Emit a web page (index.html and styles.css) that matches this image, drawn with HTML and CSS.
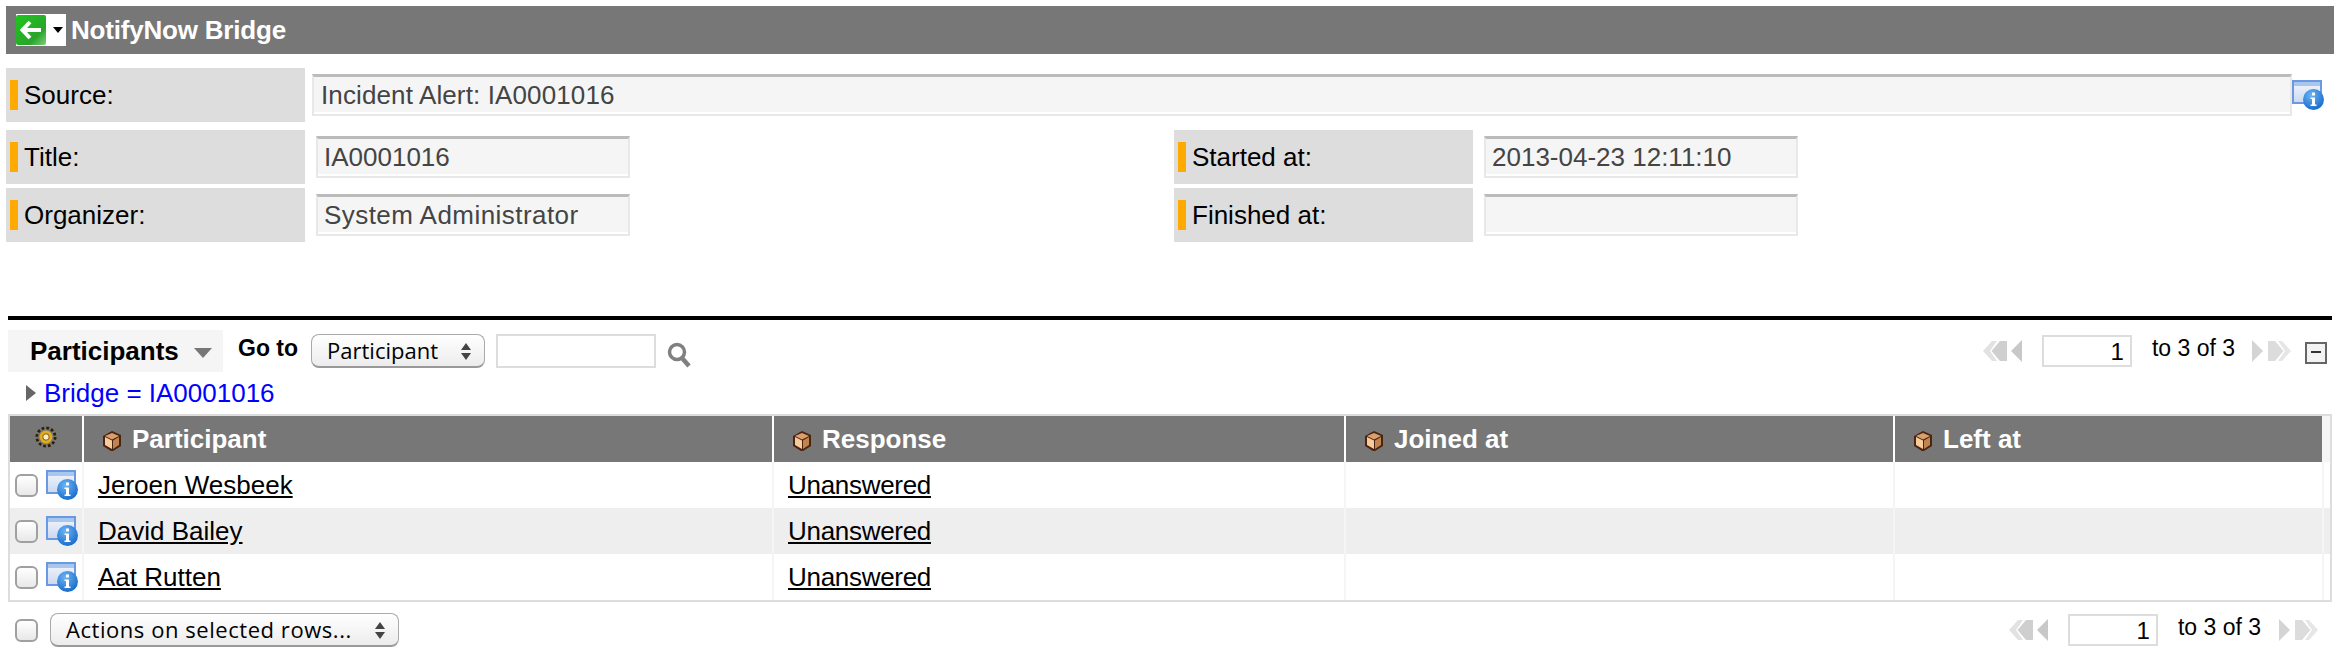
FILE: index.html
```html
<!DOCTYPE html>
<html lang="en">

<head>
    <meta charset="UTF-8">
    <title>NotifyNow Bridge</title>
    <link rel="stylesheet" href="styles.css">
</head>

<body>
    <svg class="defs" width="0" height="0">
        <defs>
            <linearGradient id="pane" x1="0" y1="0" x2="0" y2="1">
                <stop offset="0" stop-color="#f4f7fc" />
                <stop offset="1" stop-color="#c9d8ef" />
            </linearGradient>
            <radialGradient id="ball" cx=".4" cy=".3" r=".8">
                <stop offset="0" stop-color="#6cb4f2" />
                <stop offset="1" stop-color="#0f63c9" />
            </radialGradient>
            <linearGradient id="green" x1="0" y1="0" x2="1" y2="1">
                <stop offset="0" stop-color="#1fc41f" />
                <stop offset=".7" stop-color="#2aa52a" />
                <stop offset="1" stop-color="#7ccf7c" />
            </linearGradient>
            <symbol id="info" viewBox="0 0 32 30">
                <rect x="1" y="1" width="28" height="22" fill="url(#pane)" stroke="#6a98e2" stroke-width="2" />
                <rect x="2" y="2" width="26" height="4" fill="#a9c6ef" />
                <circle cx="21.500" cy="19.500" r="10.500" fill="url(#ball)" />
                <rect x="20" y="12.500" width="3" height="3" fill="#fff" />
                <path d="M18.500 17.500h4.500v7h1.500v1.500h-6v-1.500h1.500v-5.500h-1.500z" fill="#fff" />
            </symbol>
            <symbol id="cube" viewBox="0 0 20 20">
                <path d="M10 0l9 4v11l-8 5H9l-8-5V5z" fill="#4a2410" />
                <path d="M10 2l7 3-7 3.500L3 5z" fill="#d9a06c" />
                <path d="M3 6l7 3.500V18l-7-4z" fill="#f8cb9c" />
                <path d="M11 9.500L17 6v8l-6 4z" fill="#c08450" />
            </symbol>
            <symbol id="first" viewBox="0 0 40 24">
                <path d="M10 2L1 12l9 10h5L8 12l7-10z" fill="#e2e2e2" />
                <path d="M18 2L9.500 12 18 22h7V2z" fill="#cfcfcf" />
                <path d="M40 1v22L29 12z" fill="#c8c8c8" />
            </symbol>
            <symbol id="last" viewBox="0 0 40 24">
                <path d="M0 1v22l11-11z" fill="#d4d4d4" />
                <path d="M16 2v20h7l8.500-10L23 2z" fill="#dcdcdc" />
                <path d="M26 2l7 10-7 10h4l9-10-9-10z" fill="#e6e6e6" />
            </symbol>
        </defs>
    </svg>

    <div class="title_bar">
        <span class="back_btn">
            <span class="back_arrow">
                <svg width="30" height="30" viewBox="0 0 30 30">
                    <rect width="30" height="30" rx="2" fill="url(#green)" />
                    <path d="M14 7l-7.500 8 7.500 8M8 15h17" fill="none" stroke="#fff" stroke-width="4" />
                </svg>
            </span>
            <span class="back_caret"></span>
        </span>
        <b>NotifyNow Bridge</b>
    </div>

    <div class="form_row form_row_source">
        <label class="form_label"><i></i>Source:</label>
        <div class="field field_wide">Incident Alert: IA0001016</div>
        <svg class="info_icon" width="32" height="30"><use href="#info" /></svg>
    </div>
    <div class="form_row">
        <label class="form_label"><i></i>Title:</label>
        <div class="field">IA0001016</div>
        <label class="form_label form_label_right"><i></i>Started at:</label>
        <div class="field">2013-04-23 12:11:10</div>
    </div>
    <div class="form_row">
        <label class="form_label"><i></i>Organizer:</label>
        <div class="field field_org">System Administrator</div>
        <label class="form_label form_label_right"><i></i>Finished at:</label>
        <div class="field"></div>
    </div>

    <div class="list">
        <div class="list_bar">
            <div class="list_tab">Participants<span class="tab_caret"></span></div>
            <b class="goto">Go to</b>
            <div class="select select_goto">Participant<span class="updown"></span></div>
            <div class="box box_search"></div>
            <svg class="search_icon" width="26" height="26" viewBox="0 0 26 26">
                <circle cx="11" cy="10" r="7.500" fill="none" stroke="#808080" stroke-width="3.500" />
                <path d="M16 16l7 8" stroke="#808080" stroke-width="4.500" />
            </svg>
            <div class="pager">
                <svg width="40" height="24"><use href="#first" /></svg>
                <div class="box box_page">1</div>
                <span class="pager_text">to 3 of 3</span>
                <svg width="40" height="24"><use href="#last" /></svg>
            </div>
            <span class="collapse"></span>
        </div>

        <div class="filter"><span class="filter_arrow"></span>Bridge = IA0001016</div>

        <table class="grid">
            <colgroup>
                <col class="col_check">
                <col class="col_name">
                <col class="col_resp">
                <col class="col_join">
                <col class="col_left">
                <col class="col_end">
            </colgroup>
            <thead>
                <tr>
                    <th class="gear_cell">
                        <svg width="22" height="22" viewBox="0 0 24 24">
                            <circle cx="12" cy="12" r="10" fill="none" stroke="#2b2200" stroke-width="3" stroke-dasharray="3 2.240" />
                            <circle cx="12" cy="12" r="7" fill="#e5a91f" />
                            <circle cx="12" cy="12" r="3.500" fill="#f7efc0" stroke="#6b5410" />
                        </svg>
                    </th>
                    <th><svg width="20" height="20"><use href="#cube" /></svg>Participant</th>
                    <th><svg width="20" height="20"><use href="#cube" /></svg>Response</th>
                    <th><svg width="20" height="20"><use href="#cube" /></svg>Joined at</th>
                    <th><svg width="20" height="20"><use href="#cube" /></svg>Left at</th>
                    <th class="end_cell"></th>
                </tr>
            </thead>
            <tbody>
                <tr>
                    <td class="check_cell"><span class="check"></span><svg width="32" height="30"><use href="#info" /></svg></td>
                    <td><a href="#">Jeroen Wesbeek</a></td>
                    <td><a class="answer" href="#">Unanswered</a></td>
                    <td></td>
                    <td></td>
                    <td></td>
                </tr>
                <tr class="odd">
                    <td class="check_cell"><span class="check"></span><svg width="32" height="30"><use href="#info" /></svg></td>
                    <td><a href="#">David Bailey</a></td>
                    <td><a class="answer" href="#">Unanswered</a></td>
                    <td></td>
                    <td></td>
                    <td></td>
                </tr>
                <tr>
                    <td class="check_cell"><span class="check"></span><svg width="32" height="30"><use href="#info" /></svg></td>
                    <td><a href="#">Aat Rutten</a></td>
                    <td><a class="answer" href="#">Unanswered</a></td>
                    <td></td>
                    <td></td>
                    <td></td>
                </tr>
            </tbody>
        </table>

        <div class="list_foot">
            <span class="check"></span>
            <div class="select select_actions">Actions on selected rows...<span class="updown"></span></div>
            <div class="pager pager_foot">
                <svg width="40" height="24"><use href="#first" /></svg>
                <div class="box box_page">1</div>
                <span class="pager_text">to 3 of 3</span>
                <svg width="40" height="24"><use href="#last" /></svg>
            </div>
        </div>
    </div>
</body>

</html>
```

FILE: styles.css
```css
body {
    margin: 0;
    background: #fff;
    color: #000;
    font: 26px "Liberation Sans", Arial, sans-serif;
}

.defs {
    position: absolute;
}

svg {
    display: block;
    flex: none;
}

/* top bar */
.title_bar {
    display: flex;
    align-items: center;
    height: 48px;
    margin: 6px 14px 14px 6px;
    padding-left: 10px;
    background: #777;
    color: #fff;
}

.title_bar b {
    margin-left: 5px;
    font-size: 26px;
    letter-spacing: -0.2px;
}

.back_btn {
    display: flex;
    align-items: center;
    width: 50px;
    height: 32px;
    background: #fff;
}

.back_caret {
    margin-left: 7px;
    border: 5px solid transparent;
    border-top: 6px solid #000;
    border-bottom: 0;
}

/* form */
.form_row {
    display: flex;
    align-items: center;
    height: 54px;
    margin: 0 0 4px 6px;
}

.form_row_source {
    margin-bottom: 8px;
}

.form_label {
    display: flex;
    align-items: center;
    flex: none;
    width: 299px;
    height: 54px;
    padding-left: 4px;
    box-sizing: border-box;
    background: #ddd;
}

.form_label i {
    width: 8px;
    height: 30px;
    margin-right: 6px;
    background: #fa0;
}

.form_label_right {
    margin-left: 544px;
}

.field {
    flex: none;
    box-sizing: border-box;
    width: 314px;
    height: 42px;
    margin-left: 11px;
    padding-left: 6px;
    border: 2px solid #e8e8e8;
    border-top: 3px solid #bbb;
    box-shadow: inset 0 -2px #fff;
    background: #f5f5f5;
    color: #444;
    line-height: 36px;
}

.field_wide {
    width: 1980px;
    margin-left: 7px;
    padding-left: 7px;
    letter-spacing: 0.12px;
}

.field_org {
    letter-spacing: 0.45px;
}

/* list */
.list {
    margin: 74px 16px 0 8px;
    border-top: 4px solid #000;
}

.list_bar {
    display: flex;
    align-items: center;
    height: 42px;
    margin-top: 10px;
}

.list_tab {
    display: flex;
    align-items: center;
    width: 215px;
    height: 42px;
    box-sizing: border-box;
    padding-left: 22px;
    background: #f5f5f5;
    font-weight: bold;
}

.tab_caret {
    margin: 4px 0 0 15px;
    border: 9px solid transparent;
    border-top: 10px solid #777;
    border-bottom: 0;
}

.goto {
    margin: 0 13px 6px 15px;
    font-size: 23px;
}

.select {
    position: relative;
    box-sizing: border-box;
    height: 34px;
    padding-left: 15px;
    border: 1px solid #aaa;
    border-bottom: 2px solid #999;
    border-radius: 8px;
    background: linear-gradient(#fff, #ececec);
    font: 22px/30px "Open Sans", sans-serif;
}

.select_goto {
    width: 174px;
}

.select_actions {
    width: 349px;
    margin-left: 12px;
    letter-spacing: 0.55px;
}

/* up and down arrows of the native select */
.updown {
    position: absolute;
    top: 8px;
    right: 13px;
    width: 0;
    border: 5px solid transparent;
    border-top: 0;
    border-bottom: 7px solid #444;
}

.updown::after {
    content: "";
    position: absolute;
    top: 10px;
    left: -5px;
    border: 5px solid transparent;
    border-bottom: 0;
    border-top: 7px solid #444;
}

.box {
    box-sizing: border-box;
    border: 2px solid #ddd;
    background: #fff;
}

.box_search {
    width: 160px;
    height: 34px;
    margin-left: 11px;
}

.search_icon {
    margin: 8px 0 0 10px;
}

.pager {
    display: flex;
    align-items: center;
    margin-left: auto;
}

.box_page {
    width: 90px;
    height: 32px;
    margin: 0 20px;
    padding-right: 6px;
    text-align: right;
    font-size: 24px;
    line-height: 30px;
}

.pager_text {
    margin: 0 17px 6px 0;
    font-size: 23px;
}

.collapse {
    position: relative;
    box-sizing: border-box;
    width: 22px;
    height: 22px;
    margin: 3px 5px 0 13px;
    border: 2px solid #666;
    background: #f3f3f3;
}

.collapse::after {
    content: "";
    position: absolute;
    top: 7px;
    left: 4px;
    width: 10px;
    height: 2px;
    background: #333;
}

.filter {
    display: flex;
    align-items: center;
    height: 42px;
    color: #00f;
}

.filter_arrow {
    margin: 0 8px 0 18px;
    border: 8px solid transparent;
    border-left: 10px solid #666;
    border-right: 0;
}

/* participants table */
.grid {
    table-layout: fixed;
    width: 2324px;
    border: 2px solid #ddd;
    border-collapse: separate;
    border-spacing: 0;
}

.col_check {
    width: 72px;
}

.col_name {
    width: 690px;
}

.col_resp {
    width: 572px;
}

.col_join {
    width: 549px;
}

.col_left {
    width: 429px;
}

.col_end {
    width: 8px;
}

.grid th {
    height: 46px;
    padding: 0 0 0 18px;
    border-left: 2px solid #fff;
    background: #777;
    color: #fff;
    text-align: left;
    white-space: nowrap;
}

.grid th svg {
    display: inline-block;
    margin-right: 10px;
    vertical-align: -3px;
}

.grid .gear_cell {
    padding: 0;
    border-left: 0;
}

.grid .gear_cell svg {
    margin: -4px auto 0;
    display: block;
}

.grid .end_cell {
    padding: 0;
    border-left: 0;
    background: #f5f5f5;
}

.grid td {
    height: 46px;
    padding: 0 0 0 14px;
    border-left: 2px solid #f5f5f5;
}

.grid .check_cell {
    display: flex;
    align-items: center;
    gap: 8px;
    box-sizing: border-box;
    padding-left: 5px;
    border-left: 0;
}

.grid .odd td {
    background: #eee;
    border-left-color: #f5f5f5;
}

.grid a {
    color: #000;
    text-decoration: underline;
}

.grid .answer {
    letter-spacing: -0.3px;
}

.check {
    display: block;
    flex: none;
    box-sizing: border-box;
    width: 23px;
    height: 23px;
    border: 2px solid #a0a0a0;
    border-radius: 6px;
    background: linear-gradient(#fff, #e8e8e8);
}

.list_foot {
    display: flex;
    align-items: center;
    height: 34px;
    margin-top: 11px;
    padding-left: 7px;
}

.pager_foot {
    margin-right: 13px;
}

.pager_foot .pager_text {
    margin-right: 18px;
}
```
